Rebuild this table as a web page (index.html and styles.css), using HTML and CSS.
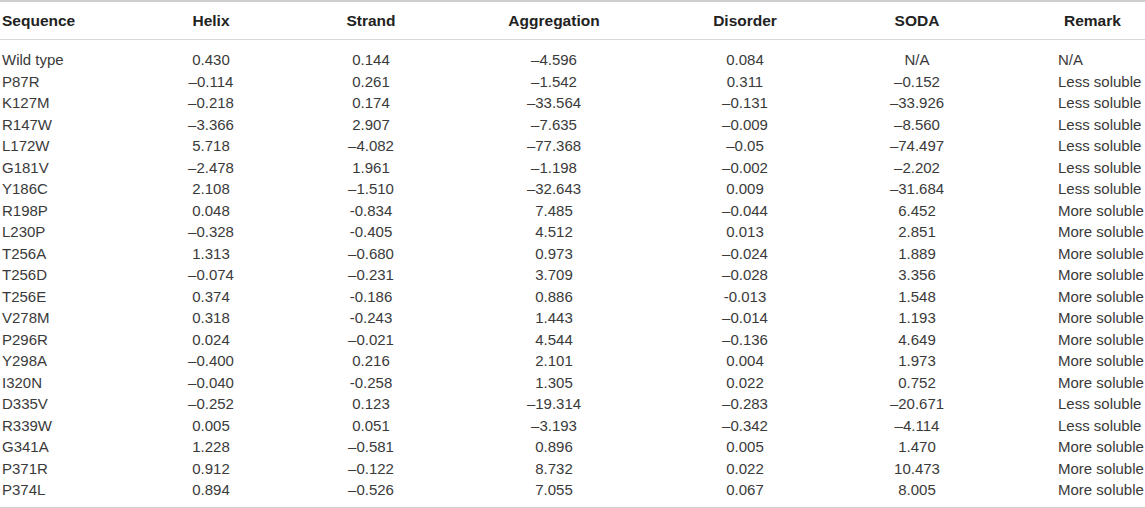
FILE: index.html
```html
<!DOCTYPE html>
<html lang="en">
<head>
    <meta charset="UTF-8">
    <meta name="viewport" content="width=device-width, initial-scale=1.0">
    <title>Solubility Predictions</title>
    <link rel="stylesheet" href="styles.css">
</head>
<body>
    <table class="data-table">
        <colgroup>
            <col class="col-seq">
            <col class="col-helix">
            <col class="col-strand">
            <col class="col-agg">
            <col class="col-dis">
            <col class="col-soda">
            <col class="col-remark">
        </colgroup>
        <thead>
            <tr>
                <th class="seq">Sequence</th>
                <th>Helix</th>
                <th>Strand</th>
                <th>Aggregation</th>
                <th>Disorder</th>
                <th>SODA</th>
                <th class="remark">Remark</th>
            </tr>
        </thead>
        <tbody>
            <tr><td class="seq">Wild type</td><td>0.430</td><td>0.144</td><td>&ndash;4.596</td><td>0.084</td><td>N/A</td><td class="remark">N/A</td></tr>
            <tr><td class="seq">P87R</td><td>&ndash;0.114</td><td>0.261</td><td>&ndash;1.542</td><td>0.311</td><td>&ndash;0.152</td><td class="remark">Less soluble</td></tr>
            <tr><td class="seq">K127M</td><td>&ndash;0.218</td><td>0.174</td><td>&ndash;33.564</td><td>&ndash;0.131</td><td>&ndash;33.926</td><td class="remark">Less soluble</td></tr>
            <tr><td class="seq">R147W</td><td>&ndash;3.366</td><td>2.907</td><td>&ndash;7.635</td><td>&ndash;0.009</td><td>&ndash;8.560</td><td class="remark">Less soluble</td></tr>
            <tr><td class="seq">L172W</td><td>5.718</td><td>&ndash;4.082</td><td>&ndash;77.368</td><td>&ndash;0.05</td><td>&ndash;74.497</td><td class="remark">Less soluble</td></tr>
            <tr><td class="seq">G181V</td><td>&ndash;2.478</td><td>1.961</td><td>&ndash;1.198</td><td>&ndash;0.002</td><td>&ndash;2.202</td><td class="remark">Less soluble</td></tr>
            <tr><td class="seq">Y186C</td><td>2.108</td><td>&ndash;1.510</td><td>&ndash;32.643</td><td>0.009</td><td>&ndash;31.684</td><td class="remark">Less soluble</td></tr>
            <tr><td class="seq">R198P</td><td>0.048</td><td>-0.834</td><td>7.485</td><td>&ndash;0.044</td><td>6.452</td><td class="remark">More soluble</td></tr>
            <tr><td class="seq">L230P</td><td>&ndash;0.328</td><td>-0.405</td><td>4.512</td><td>0.013</td><td>2.851</td><td class="remark">More soluble</td></tr>
            <tr><td class="seq">T256A</td><td>1.313</td><td>&ndash;0.680</td><td>0.973</td><td>&ndash;0.024</td><td>1.889</td><td class="remark">More soluble</td></tr>
            <tr><td class="seq">T256D</td><td>&ndash;0.074</td><td>&ndash;0.231</td><td>3.709</td><td>&ndash;0.028</td><td>3.356</td><td class="remark">More soluble</td></tr>
            <tr><td class="seq">T256E</td><td>0.374</td><td>-0.186</td><td>0.886</td><td>-0.013</td><td>1.548</td><td class="remark">More soluble</td></tr>
            <tr><td class="seq">V278M</td><td>0.318</td><td>-0.243</td><td>1.443</td><td>&ndash;0.014</td><td>1.193</td><td class="remark">More soluble</td></tr>
            <tr><td class="seq">P296R</td><td>0.024</td><td>&ndash;0.021</td><td>4.544</td><td>&ndash;0.136</td><td>4.649</td><td class="remark">More soluble</td></tr>
            <tr><td class="seq">Y298A</td><td>&ndash;0.400</td><td>0.216</td><td>2.101</td><td>0.004</td><td>1.973</td><td class="remark">More soluble</td></tr>
            <tr><td class="seq">I320N</td><td>&ndash;0.040</td><td>-0.258</td><td>1.305</td><td>0.022</td><td>0.752</td><td class="remark">More soluble</td></tr>
            <tr><td class="seq">D335V</td><td>&ndash;0.252</td><td>0.123</td><td>&ndash;19.314</td><td>&ndash;0.283</td><td>&ndash;20.671</td><td class="remark">Less soluble</td></tr>
            <tr><td class="seq">R339W</td><td>0.005</td><td>0.051</td><td>&ndash;3.193</td><td>&ndash;0.342</td><td>&ndash;4.114</td><td class="remark">Less soluble</td></tr>
            <tr><td class="seq">G341A</td><td>1.228</td><td>&ndash;0.581</td><td>0.896</td><td>0.005</td><td>1.470</td><td class="remark">More soluble</td></tr>
            <tr><td class="seq">P371R</td><td>0.912</td><td>&ndash;0.122</td><td>8.732</td><td>0.022</td><td>10.473</td><td class="remark">More soluble</td></tr>
            <tr><td class="seq">P374L</td><td>0.894</td><td>&ndash;0.526</td><td>7.055</td><td>0.067</td><td>8.005</td><td class="remark">More soluble</td></tr>
        </tbody>
    </table>
</body>
</html>
```

FILE: styles.css
```css
body {
    font-family: "Liberation Sans", Arial, sans-serif;
    margin: 0;
    padding: 0;
    background-color: white;
    color: #3a3a3a;
}

.data-table {
    width: 1145px;
    table-layout: fixed;
    border-collapse: collapse;
    font-size: 15px;
    border-top: 2px solid #cfcfcf;
    border-bottom: 2px solid #cfcfcf;
}

.col-seq { width: 130px; }
.col-helix { width: 162px; }
.col-strand { width: 158px; }
.col-agg { width: 208px; }
.col-dis { width: 174px; }
.col-soda { width: 170px; }
.col-remark { width: 143px; }

th, td {
    padding: 0;
    text-align: center;
    white-space: nowrap;
}

th {
    height: 37px;
    font-size: 15.5px;
    font-weight: bold;
    color: #222;
    border-bottom: 1px solid #d8d8d8;
}

td {
    height: 21.5px;
    line-height: 21.5px;
}

tbody tr:first-child td {
    padding-top: 9px;
}

tbody tr:last-child td {
    padding-bottom: 6px;
}

th.seq, td.seq {
    text-align: left;
    padding-left: 2px;
}

th.remark {
    text-align: left;
    padding-left: 62px;
}

td.remark {
    text-align: left;
    padding-left: 56px;
}
```
